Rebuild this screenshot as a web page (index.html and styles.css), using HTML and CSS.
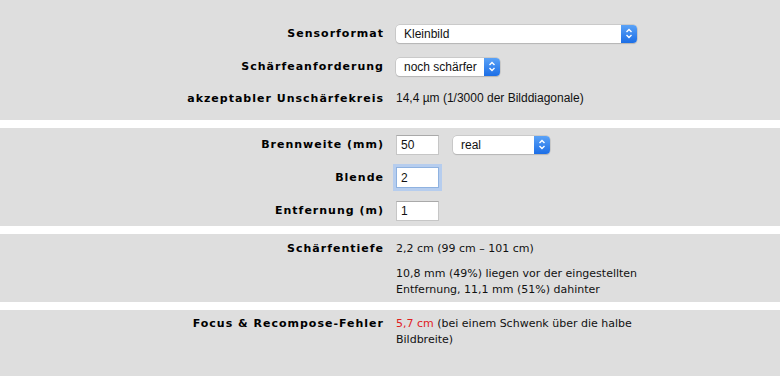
FILE: index.html
```html
<!DOCTYPE html>
<html lang="de">
<head>
    <meta charset="UTF-8">
    <meta name="viewport" content="width=device-width, initial-scale=1.0">
    <title>Schärfentiefe-Rechner</title>

    <link rel="stylesheet" href="styles.css">
</head>
<body>

    <!-- Sensor and sharpness settings -->
    <section class="panel panel-sensor">
        <div class="row row-tall">
            <span class="label">Sensorformat</span>
            <div class="select select-format">
                <span>Kleinbild</span>
                <span class="select-arrow"><svg width="8" height="11" viewBox="0 0 8 11"><path d="M1.5 4 L4 1.5 L6.5 4 M1.5 7 L4 9.5 L6.5 7" fill="none" stroke="#fff" stroke-width="1.4"/></svg></span>
            </div>
        </div>
        <div class="row row-tall">
            <span class="label">Schärfeanforderung</span>
            <div class="select select-sharpness">
                <span>noch schärfer</span>
                <span class="select-arrow"><svg width="8" height="11" viewBox="0 0 8 11"><path d="M1.5 4 L4 1.5 L6.5 4 M1.5 7 L4 9.5 L6.5 7" fill="none" stroke="#fff" stroke-width="1.4"/></svg></span>
            </div>
        </div>
        <div class="row row-short">
            <span class="label">akzeptabler Unschärfekreis</span>
            <span class="value value-sans">14,4 µm (1/3000 der Bilddiagonale)</span>
        </div>
    </section>

    <!-- Lens settings -->
    <section class="panel panel-lens">
        <div class="row row-input">
            <span class="label">Brennweite (mm)</span>
            <div class="inline">
                <input class="field" type="text" value="50">
                <div class="select select-mode">
                    <span>real</span>
                    <span class="select-arrow"><svg width="8" height="11" viewBox="0 0 8 11"><path d="M1.5 4 L4 1.5 L6.5 4 M1.5 7 L4 9.5 L6.5 7" fill="none" stroke="#fff" stroke-width="1.4"/></svg></span>
                </div>
            </div>
        </div>
        <div class="row row-input">
            <span class="label">Blende</span>
            <input class="field field-focus" type="text" value="2">
        </div>
        <div class="row row-input">
            <span class="label">Entfernung (m)</span>
            <input class="field" type="text" value="1">
        </div>
    </section>

    <!-- Depth of field result -->
    <section class="panel panel-result">
        <div class="row row-text">
            <span class="label">Schärfentiefe</span>
            <span class="value">2,2 cm (99 cm – 101 cm)</span>
        </div>
        <div class="row row-text row-note">
            <span class="label"></span>
            <span class="value">10,8 mm (49%) liegen vor der eingestellten<br>Entfernung, 11,1 mm (51%) dahinter</span>
        </div>
    </section>

    <!-- Focus & recompose error -->
    <section class="panel panel-error">
        <div class="row row-text">
            <span class="label">Focus &amp; Recompose-Fehler</span>
            <span class="value"><span class="error">5,7 cm</span> (bei einem Schwenk über die halbe<br>Bildbreite)</span>
        </div>
    </section>

</body>
</html>
```

FILE: styles.css
```css
body {
    margin: 0;
    background-color: #fff;
    color: #111;
    font-family: "DejaVu Sans", Verdana, sans-serif;
    font-size: 11px;
}

.panel {
    background-color: #dedede;
    margin-bottom: 8px;
}

.panel-sensor {
    height: 120px;
    padding-top: 17px;
    box-sizing: border-box;
}

.panel-lens {
    height: 98px;
}

.panel-result {
    height: 68px;
    padding-top: 7px;
    box-sizing: border-box;
}

.panel-error {
    height: 67px;
    margin-bottom: 0;
    padding-top: 6px;
    box-sizing: border-box;
}

/* Label column on the left, values on the right */
.row {
    display: grid;
    grid-template-columns: 384px 1fr;
    column-gap: 12px;
    align-items: center;
}

.row-tall {
    height: 33px;
}

.row-short {
    height: 30px;
}

.row-input {
    height: 33px;
}

.row-text {
    align-items: start;
    line-height: 16px;
}

.row-note {
    margin-top: 9px;
}

.label {
    text-align: right;
    font-weight: bold;
    font-size: 11px;
    letter-spacing: 1px;
    color: #000;
}

.value-sans {
    font-family: "Liberation Sans", Arial, sans-serif;
    font-size: 12px;
}

.error {
    color: #e0201f;
}

/* Fake macOS select boxes */
.select {
    display: flex;
    align-items: center;
    justify-content: space-between;
    height: 18px;
    box-sizing: border-box;
    padding-left: 8px;
    background-color: #fff;
    border-radius: 4px;
    box-shadow: 0 0 0 0.5px #b5b5b5, 0 1px 1px rgba(0, 0, 0, 0.18);
    font-family: "Liberation Sans", Arial, sans-serif;
    font-size: 12px;
    color: #111;
}

.select-format {
    width: 241px;
}

.select-sharpness {
    width: 104px;
}

.select-mode {
    width: 97px;
    margin-left: 14px;
}

.select-arrow {
    display: flex;
    align-items: center;
    justify-content: center;
    width: 16px;
    height: 18px;
    border-radius: 0 4px 4px 0;
    background: linear-gradient(#5aa2f7, #1c6ee6);
}

.inline {
    display: flex;
    align-items: center;
}

.field {
    width: 43px;
    height: 20px;
    box-sizing: border-box;
    margin: 0;
    padding: 0 4px;
    border: 1px solid #c6c6c6;
    border-top-color: #a9a9a9;
    background-color: #fff;
    font-family: "Liberation Sans", Arial, sans-serif;
    font-size: 12px;
    color: #111;
    outline: none;
}

.field-focus {
    height: 21px;
    border-color: #8fb2e0;
    box-shadow: 0 0 0 3px #b6cdee;
}
```
